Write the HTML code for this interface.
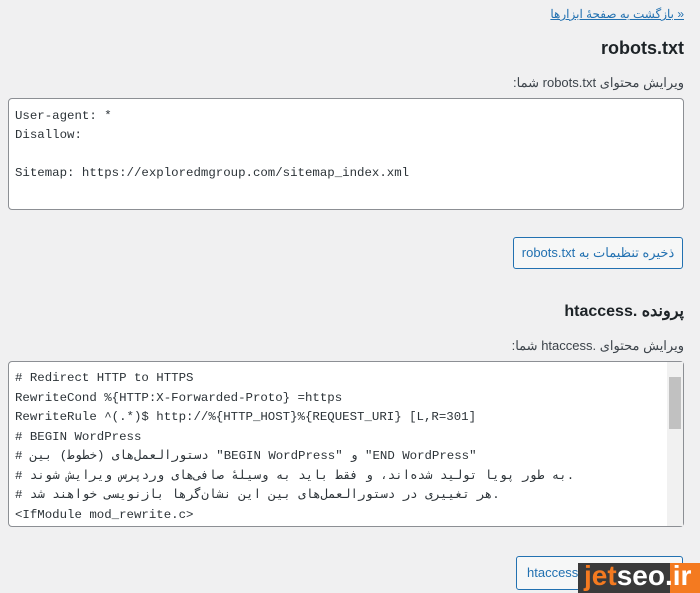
<!DOCTYPE html>
<html><head><meta charset="utf-8"><style>
body{margin:0;width:700px;height:593px;background:#f0f0f1;position:relative;overflow:hidden;font-family:"Liberation Sans","Noto Sans CJK SC",sans-serif;color:#1d2327}
.a{position:absolute}
.mono{font-family:"Liberation Mono","DejaVu Sans Mono",monospace;font-size:12.4px;color:#2c3338}
.ta{background:#fff;border:1px solid #8c8f94;border-radius:4px;box-sizing:border-box}
.btn{border:1px solid #2271b1;border-radius:3px;background:#f6f7f7;color:#2271b1;font-size:13px;box-sizing:border-box;text-align:center}
</style></head><body>
<div class="a" style="right:16px;top:7px;font-size:12px;color:#2271b1;text-decoration:underline;direction:rtl">« بازگشت به صفحهٔ ابزارها</div>
<div class="a" style="right:16px;top:38px;font-size:18px;font-weight:bold">robots.txt</div>
<div class="a" style="right:16px;top:75px;font-size:13px;color:#3c434a;direction:rtl">ویرایش محتوای robots.txt شما:</div>
<div class="a ta mono" style="left:8px;top:98px;width:676px;height:112px;padding:8px 6px;line-height:19px;white-space:pre">User-agent: *
Disallow:

Sitemap: https://exploredmgroup.com/sitemap_index.xml</div>
<div class="a btn" style="left:513px;top:237px;width:170px;height:32px;line-height:30px;direction:rtl">ذخیره تنظیمات به robots.txt</div>
<div class="a" style="right:16px;top:301px;font-size:16px;font-weight:bold;direction:rtl">پرونده .htaccess</div>
<div class="a" style="right:16px;top:338px;font-size:13px;color:#3c434a;direction:rtl">ویرایش محتوای .htaccess شما:</div>
<div class="a ta mono" style="left:8px;top:361px;width:676px;height:166px;padding:7px 6px;line-height:19.5px;white-space:pre;overflow:hidden"># Redirect HTTP to HTTPS
RewriteCond %{HTTP:X-Forwarded-Proto} =https
RewriteRule ^(.*)$ http://%{HTTP_HOST}%{REQUEST_URI} [L,R=301]
# BEGIN WordPress
# دستورالعمل‌های (خطوط) بین "BEGIN WordPress" و "END WordPress"
# به طور پویا تولید شده‌اند، و فقط باید به وسیلهٔ صافی‌های وردپرس ویرایش شوند.
# هر تغییری در دستورالعمل‌های بین این نشان‌گرها بازنویسی خواهند شد.
&lt;IfModule mod_rewrite.c&gt;</div>
<div class="a" style="left:667px;top:362px;width:16px;height:164px;background:#f1f1f1"></div>
<div class="a" style="left:669px;top:377px;width:12px;height:52px;background:#c1c1c1"></div>
<div class="a btn" style="left:516px;top:556px;width:167px;height:34px;line-height:32px;text-align:left;padding-left:10px">htaccess. ذخیره تنظیمات</div>
<div class="a" style="left:578px;top:563px;width:92px;height:30px;background:#3a3a3a"></div>
<div class="a" style="left:670px;top:563px;width:30px;height:30px;background:#f47a20"></div>
<div class="a" style="left:584px;top:559px;font-size:28px;font-weight:bold;line-height:34px;white-space:nowrap"><span style="color:#f47a20">jet</span><span style="color:#fff">seo</span><span style="color:#fff">.ir</span></div>
</body></html>
